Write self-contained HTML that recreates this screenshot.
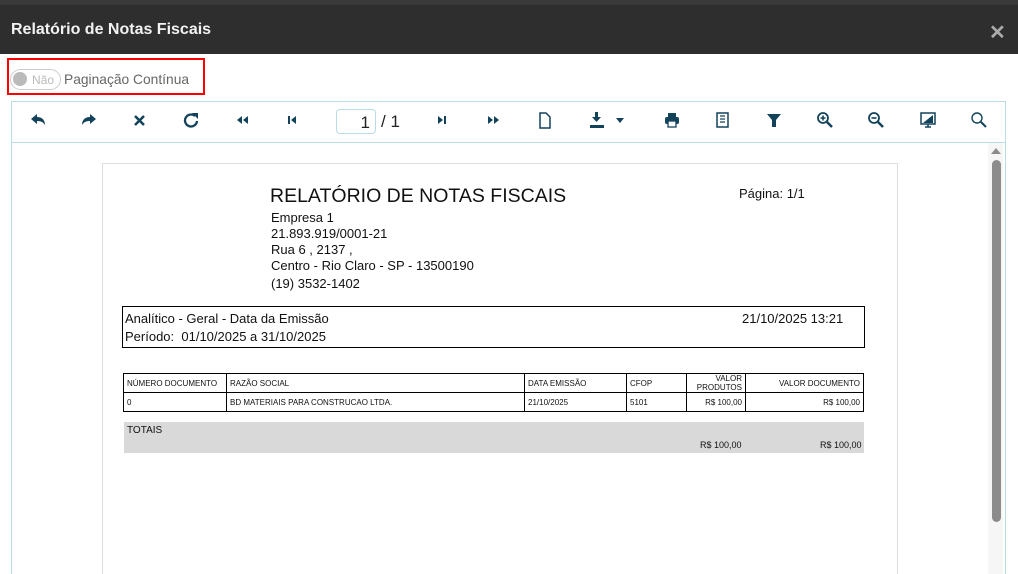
<!DOCTYPE html>
<html><head><meta charset="utf-8">
<style>
*{margin:0;padding:0;box-sizing:border-box}
html,body{width:1018px;height:574px;overflow:hidden}
body{background:#fff;font-family:"Liberation Sans",sans-serif;position:relative;color:#111}
.a{position:absolute}
.hdr{left:0;top:0;width:1018px;height:54px;background:#2e2e2e;border-top:5px solid #3a3a3a}
.ttl{left:11px;top:21px;color:#f2f2f2;font-weight:bold;font-size:16px}
.cls{left:989px;top:20px;color:#aaa;font-size:20px;font-weight:bold}
.red{left:7px;top:58px;width:198px;height:37px;border:2px solid #f00}
.tog{left:10px;top:69px;width:51px;height:21px;border:1px solid #ccc;border-radius:11px}
.dot{left:13px;top:72px;width:14px;height:14px;border-radius:50%;background:#bbb}
.nao{left:32px;top:73px;font-size:12px;color:#bbb}
.pag{left:64px;top:72px;font-size:13.8px;color:#666}
.frame{left:11px;top:101px;width:995px;height:473px;border:1px solid #b8dde6;border-bottom:none}
.tbline{left:12px;top:142px;width:993px;height:1px;background:#b8dde6}
.ic{position:absolute;top:111px}
.pbox{left:336px;top:109px;width:40px;height:25px;border:1px solid #b8dde6;border-radius:4px;font-size:17px;text-align:right;padding:3px 5px 0 0;color:#222}
.of{left:381px;top:112px;font-size:17px;color:#222}
.track{left:988px;top:143px;width:15px;height:431px;background:#f6f6f6}
.thumb{left:992px;top:160px;width:9px;height:362px;background:#8c8c8c;border-radius:5px}
.paper{left:102px;top:163px;width:796px;height:411px;border:1px solid #ddd;border-bottom:none}
.rt{left:270px;top:185px;font-size:19.5px;color:#111}
.ln{left:271px;font-size:13px;color:#111}
.box{left:122px;top:306px;width:743px;height:42px;border:1px solid #000}
table{position:absolute;left:123px;top:373px;width:741px;border-collapse:collapse;font-size:8px}
td{border:1px solid #000;height:19px;padding:0 3px;vertical-align:middle}
.r{text-align:right}
.tot{left:124px;top:422px;width:740px;height:31px;background:#d9d9d9;font-size:10px}
</style></head><body>
<div class="a hdr"></div>
<div class="a ttl">Relatório de Notas Fiscais</div>
<div class="a cls">✕</div>
<div class="a red"></div>
<div class="a tog"></div><div class="a dot"></div><div class="a nao">Não</div>
<div class="a pag">Paginação Contínua</div>
<div class="a frame"></div>
<div class="a tbline"></div>
<svg class="ic" style="left:29px" width="18" height="18" viewBox="0 0 18 18"><path d="M2 8L8 3v3c5 0 8 3 8 8c-2-3-4-4-8-4v3z" fill="#12435a"/></svg>
<svg class="ic" style="left:80px" width="18" height="18" viewBox="0 0 18 18"><path d="M16 8L10 3v3c-5 0-8 3-8 8c2-3 4-4 8-4v3z" fill="#12435a"/></svg>
<svg class="ic" style="left:132px" width="16" height="18" viewBox="0 0 16 18"><path d="M3 5l9 9M12 5l-9 9" stroke="#12435a" stroke-width="2.5"/></svg>
<svg class="ic" style="left:182px" width="18" height="18" viewBox="0 0 18 18"><path d="M13 5A6 6 0 1 0 15 10" stroke="#12435a" stroke-width="2.3" fill="none"/><path d="M10 2h6v6z" fill="#12435a"/></svg>
<svg class="ic" style="left:234px" width="16" height="18" viewBox="0 0 16 18"><path d="M8 5l-5 4 5 4zM14 5l-5 4 5 4z" fill="#12435a"/></svg>
<svg class="ic" style="left:286px" width="12" height="18" viewBox="0 0 12 18"><path d="M2 5h2v8H2zM10 5L5 9l5 4z" fill="#12435a"/></svg>
<div class="a pbox">1</div><div class="a of">/ 1</div>
<svg class="ic" style="left:436px" width="12" height="18" viewBox="0 0 12 18"><path d="M8 5h2v8H8zM2 5l5 4-5 4z" fill="#12435a"/></svg>
<svg class="ic" style="left:486px" width="16" height="18" viewBox="0 0 16 18"><path d="M2 5l5 4-5 4zM8 5l5 4-5 4z" fill="#12435a"/></svg>
<svg class="ic" style="left:538px" width="14" height="18" viewBox="0 0 14 18"><path d="M2 2h6l4 4v11H2z" stroke="#12435a" stroke-width="1.5" fill="none"/></svg>
<svg class="ic" style="left:588px" width="40" height="20" viewBox="0 0 40 20"><path d="M7 1h3v5h3l-4.5 5L4 6h3z" fill="#12435a"/><rect x="2" y="14" width="14" height="3" fill="#12435a"/><path d="M28 7h8l-4 5z" fill="#12435a"/></svg>
<svg class="ic" style="left:663px" width="18" height="18" viewBox="0 0 18 18"><rect x="5" y="2" width="8" height="4" fill="#12435a"/><rect x="2" y="6" width="14" height="7" rx="2" fill="#12435a"/><rect x="5" y="10" width="8" height="6" fill="#fff" stroke="#12435a" stroke-width="1.3"/></svg>
<svg class="ic" style="left:715px" width="16" height="18" viewBox="0 0 16 18"><rect x="2" y="2" width="11" height="14" stroke="#12435a" stroke-width="1.5" fill="none"/><path d="M5 5h5M5 8h5M5 11h5" stroke="#12435a" stroke-width="1.3"/></svg>
<svg class="ic" style="left:765px" width="18" height="18" viewBox="0 0 18 18"><path d="M2 3h14l-5 6v7h-4V9z" fill="#12435a"/></svg>
<svg class="ic" style="left:816px" width="18" height="18" viewBox="0 0 18 18"><circle cx="7" cy="7" r="5" stroke="#12435a" stroke-width="1.8" fill="none"/><path d="M11 11l5 5" stroke="#12435a" stroke-width="2.5"/><path d="M4.5 7h5M7 4.5v5" stroke="#12435a" stroke-width="1.6"/></svg>
<svg class="ic" style="left:867px" width="18" height="18" viewBox="0 0 18 18"><circle cx="7" cy="7" r="5" stroke="#12435a" stroke-width="1.8" fill="none"/><path d="M11 11l5 5" stroke="#12435a" stroke-width="2.5"/><path d="M4.5 7h5" stroke="#12435a" stroke-width="1.6"/></svg>
<svg class="ic" style="left:919px" width="18" height="18" viewBox="0 0 18 18"><rect x="2" y="2" width="14" height="11" stroke="#12435a" stroke-width="1.5" fill="none"/><path d="M4 12L14 4v8z" fill="#12435a"/><path d="M9 13v3M6 16h6" stroke="#12435a" stroke-width="1.5"/></svg>
<svg class="ic" style="left:970px" width="18" height="18" viewBox="0 0 18 18"><circle cx="7" cy="7" r="5" stroke="#12435a" stroke-width="1.4" fill="none"/><path d="M11 11l5 5" stroke="#12435a" stroke-width="2"/></svg>
<div class="a track"></div>
<svg class="a" style="left:990px;top:147px" width="12" height="8"><path d="M1 7L6 1l5 6z" fill="#8c8c8c"/></svg>
<div class="a thumb"></div>
<div class="a paper"></div>
<div class="a rt">RELATÓRIO DE NOTAS FISCAIS</div>
<div class="a" style="left:739px;top:186px;font-size:13px">Página: 1/1</div>
<div class="a ln" style="top:210px">Empresa 1</div>
<div class="a ln" style="top:226px">21.893.919/0001-21</div>
<div class="a ln" style="top:242px">Rua 6 , 2137 ,</div>
<div class="a ln" style="top:258px">Centro - Rio Claro - SP - 13500190</div>
<div class="a ln" style="top:276px">(19) 3532-1402</div>
<div class="a box"></div>
<div class="a" style="left:125px;top:311px;font-size:13px">Analítico - Geral - Data da Emissão</div>
<div class="a" style="left:125px;top:329px;font-size:13px">Período:&nbsp; 01/10/2025 a 31/10/2025</div>
<div class="a" style="left:742px;top:311px;font-size:13px">21/10/2025 13:21</div>
<table>
<tr><td style="width:103px">NÚMERO DOCUMENTO</td><td style="width:298px">RAZÃO SOCIAL</td><td style="width:102px">DATA EMISSÃO</td><td style="width:60px">CFOP</td><td class="r" style="width:59px;line-height:9px">VALOR<br>PRODUTOS</td><td class="r">VALOR DOCUMENTO</td></tr>
<tr><td>0</td><td>BD MATERIAIS PARA CONSTRUCAO LTDA.</td><td>21/10/2025</td><td>5101</td><td class="r">R$ 100,00</td><td class="r">R$ 100,00</td></tr>
</table>
<div class="a tot"><div class="a" style="left:3px;top:3px">TOTAIS</div><div class="a" style="left:576px;top:18px;font-size:9px">R$ 100,00</div><div class="a" style="left:696px;top:18px;font-size:9px">R$ 100,00</div></div>
</body></html>
